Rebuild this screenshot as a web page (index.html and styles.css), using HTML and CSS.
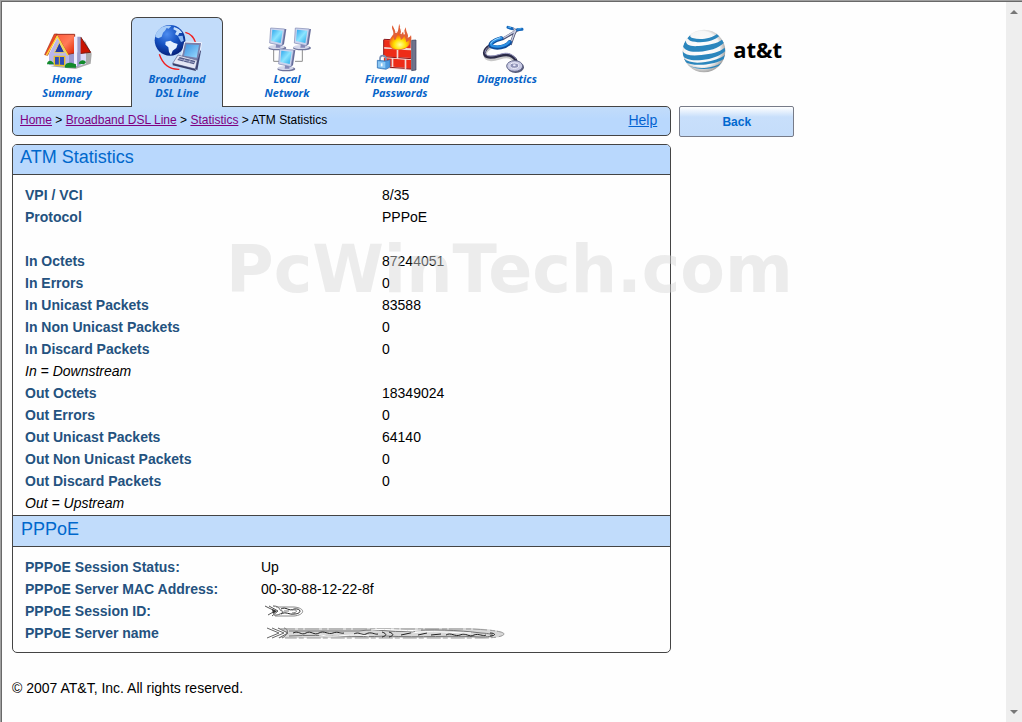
FILE: index.html
```html
<!DOCTYPE html>
<html lang="en">
<head>
    <meta charset="UTF-8">
    <meta name="viewport" content="width=device-width, initial-scale=1.0">
    <title>ATM Statistics</title>
    <link rel="stylesheet" href="styles.css">
</head>
<body>
    <div class="page">
        <main class="main">
            <nav class="tabs">
                <a href="#" class="tab">
                    <svg class="tab-icon" viewBox="123 66 156 156" aria-hidden="true">
                        <defs>
                            <linearGradient id="roof" x1="0" y1="0" x2="1" y2="1">
                                <stop offset="0" stop-color="#ff5a3c"/>
                                <stop offset=".5" stop-color="#ff7a58"/>
                                <stop offset="1" stop-color="#e02000"/>
                            </linearGradient>
                        </defs>
                        <path d="M150 196l76 8 46-16 3-30-21-40-8 70z" fill="#555" opacity=".5"/>
                        <path d="M147 160l25-50 34 50v38l-59-6z" fill="#b9b6ec"/>
                        <path d="M206 158l30-4v42l-30 4z" fill="#9a98d0"/>
                        <path d="M236 152l22 2v34l-22 8z" fill="#dcdaf8"/>
                        <path d="M172 99l-9 0 -29 62 9 2z" fill="#f04a20" stroke="#a03020" stroke-width="2"/>
                        <path d="M170 100h54v56l-20 4z" fill="url(#roof)" stroke="#a03020" stroke-width="3"/>
                        <path d="M242 108l30 46-36 4z" fill="#c81400" stroke="#7a1a10" stroke-width="3"/>
                        <path d="M222 107h10v88h-10z" fill="#ececff"/>
                        <path d="M232 107h10v86l-10 3z" fill="#9c9dcc"/>
                        <path d="M139 163l33-57 32 57" fill="none" stroke="#ffd83c" stroke-width="4"/>
                        <path d="M178 124l16 31h-31z" fill="#2439a8" stroke="#f5d860" stroke-width="3"/>
                        <path d="M163 166h31v28l-31-2z" fill="#2e4cb4" stroke="#e8bf2c" stroke-width="4"/>
                        <path d="M178 166v28" stroke="#e8bf2c" stroke-width="3"/>
                        <path d="M141 190c0-14 17-14 21 0zM194 196c4-14 20-12 34-6v10h-32zM236 188c2-12 18-14 22-4l-6 6z" fill="#128a2b"/>
                    </svg>
                    <span class="tab-label">Home<br>Summary</span>
                </a>
                <a href="#" class="tab active" aria-current="page">
                    <svg class="tab-icon" viewBox="453 66 156 156" aria-hidden="true">
                        <defs>
                            <radialGradient id="globe" cx=".4" cy=".3" r=".75">
                                <stop offset="0" stop-color="#4c8cf0"/>
                                <stop offset=".5" stop-color="#1450c0"/>
                                <stop offset="1" stop-color="#041c74"/>
                            </radialGradient>
                            <linearGradient id="laptop" x1="0" y1="0" x2="1" y2="1">
                                <stop offset="0" stop-color="#3a90e0"/>
                                <stop offset="1" stop-color="#9adcff"/>
                            </linearGradient>
                        </defs>
                        <path d="M556 94c16 4 26 14 31 32M478 160c10 30 32 46 60 45" fill="none" stroke="#f02020" stroke-width="4"/>
                        <circle cx="510" cy="118" r="46" fill="url(#globe)"/>
                        <path d="M478 84c10-9 24-11 36-9l-8 8-6-2-5 8-6 6-4 12-10 5-9-4c0-9 5-18 12-24z" fill="#a8cdf8"/>
                        <path d="M522 78c12 3 20 9 25 18l-9 0-4 8-9-4 5-10-10-5z" fill="#c4defc"/>
                        <path d="M497 122l14-3 10 6 12 4-4 12-11 8-5 14-6-10-2-14-9-8z" fill="#e4f0ff"/>
                        <path d="M534 106l14-2 3 16-8 3z" fill="#8cb8f4"/>
                        <path d="M554 123l51 2-10 55-52-8z" fill="#7880ac" stroke="#f0f4ff" stroke-width="3"/>
                        <path d="M559 130l38 2-7 38-38-6z" fill="url(#laptop)"/>
                        <path d="M534 162l58 16-6 26-68-17z" fill="#e4e6f4" stroke="#5c628c" stroke-width="2"/>
                        <path d="M539 168l47 12-4 10-50-13z" fill="#525a88"/>
                        <path d="M535 173l48 12M556 172l-6 11M571 176l-5 11" stroke="#c8cce4" stroke-width="2"/>
                        <path d="M518 187l68 17 2 6-70-17z" fill="#38406c"/>
                        <path d="M592 178l9-30 2 2-11 58-6-4z" fill="#3f4674"/>
                    </svg>
                    <span class="tab-label">Broadband<br>DSL Line</span>
                </a>
                <a href="#" class="tab">
                    <svg class="tab-icon" viewBox="63 66 156 156" aria-hidden="true">
                        <defs>
                            <linearGradient id="screen" x1="0" y1="0" x2="1" y2="1">
                                <stop offset="0" stop-color="#2ca4ec"/>
                                <stop offset=".5" stop-color="#8ce4ff"/>
                                <stop offset="1" stop-color="#20a8e8"/>
                            </linearGradient>
                            <g id="monitor">
                                <ellipse cx="26" cy="61" rx="27" ry="7" fill="#70759c"/>
                                <ellipse cx="24" cy="58" rx="24" ry="6" fill="#d4d7ea"/>
                                <path d="M23 46l14 2-2 12H21z" fill="#868ab8"/>
                                <path d="M44 5l9-1-7 46-9 6z" fill="#666c9a"/>
                                <path d="M6 1l42 3-8 50-37-8z" fill="#ccd4ee" stroke="#7d86b0" stroke-width="2"/>
                                <path d="M11 6l31 3-6 37-28-6z" fill="url(#screen)"/>
                            </g>
                        </defs>
                        <path d="M101 140v41h16M187 140v41h-22" fill="none" stroke="#8c8c8c" stroke-width="3"/>
                        <use href="#monitor" x="86" y="80"/>
                        <use href="#monitor" x="160" y="80"/>
                        <use href="#monitor" x="113" y="143"/>
                    </svg>
                    <span class="tab-label">Local<br>Network</span>
                </a>
                <a href="#" class="tab">
                    <svg class="tab-icon" viewBox="393 66 156 156" aria-hidden="true">
                        <defs>
                            <radialGradient id="flame" cx=".5" cy=".72" r=".6">
                                <stop offset="0" stop-color="#ffffa0"/>
                                <stop offset=".5" stop-color="#ffe000"/>
                                <stop offset="1" stop-color="#f85a10"/>
                            </radialGradient>
                        </defs>
                        <path d="M430 114l85 4v90l-85-6z" fill="#f4d8d4"/>
                        <path d="M515 118l13-1v90l-13 2z" fill="#70748c" stroke="#383c58" stroke-width="2"/>
                        <path d="M432 117l26 1v22l-26-2zM462 118l50 4v20l-50-3zM432 143l38 2v24l-38-3zM475 146l38 2v23l-38-2zM432 171l23 2v24l-23-2zM460 173l34 3v24l-34-3zM499 176l14 1v27l-14-2z" fill="#ee2c18"/>
                        <path d="M432 167l38 3M475 170l38 3M450 199l44 3M431 116v50M499 203l14 1M432 115l22 1M500 119l13 1" stroke="#8c1418" stroke-width="3"/>
                        <path d="M451 137c-8-15 0-25 9-37 2-12-8-17-2-27 3 12 12 13 12 24 8-10 2-17 8-28 1 10 10 16 6 27 8-2 8-9 14-17-2 13 10 22 5 31 6-1 8-4 10-8 4 17-2 40-28 44-17 2-30 0-34-9z" fill="#e06038"/>
                        <path d="M451 133c-4-12 4-19 10-30 1 9 0 12 4 15 5-7 4-14 11-23 1 10 8 14 6 22 7-2 8-9 13-14-1 9 5 13 3 20 6-1 8-4 11-8 3 16-7 28-29 30-16 1-26-2-29-12z" fill="url(#flame)"/>
                        <path d="M463 79c3 8 6 9 5 17M481 77c2 10 7 13 2 22M474 72l-2 16M492 80c-3 8 0 14 1 20" fill="none" stroke="#fff" stroke-width="4"/>
                        <path d="M420 180v-7c0-12 17-12 18 0v8" fill="none" stroke="#7890b4" stroke-width="5"/>
                        <path d="M412 178l26 2 12-4v22l-12 7-26-4z" fill="#4f9ade" stroke="#2a6cb0" stroke-width="2"/>
                        <path d="M414 181l22 2v19l-22-3z" fill="#8cc8f4"/>
                        <path d="M425 187v9" stroke="#fff" stroke-width="5"/>
                    </svg>
                    <span class="tab-label">Firewall and<br>&nbsp; Passwords</span>
                </a>
                <a href="#" class="tab">
                    <svg class="tab-icon" viewBox="723 66 156 156" aria-hidden="true">
                        <path d="M757 137c-28 14-30 38-4 39 22 1 40-16 59-6 12 6 14 14 13 24" fill="none" stroke="#777" stroke-width="9" opacity=".4"/>
                        <path d="M753 132c-26 14-26 36-2 37 22 1 40-14 59-6 14 6 19 14 20 24" fill="none" stroke="#2c2c48" stroke-width="9"/>
                        <path d="M751 134c-22 14-20 30 0 31 22 1 40-14 59-6 8 3 14 8 17 14" fill="none" stroke="#9c9cc4" stroke-width="3"/>
                        <path d="M812 81c12 3 17 6 12 12l-38 22M838 86c-12 0-14 8-16 15l-11 30" fill="none" stroke="#4c5070" stroke-width="8"/>
                        <path d="M812 80c12 3 16 6 11 12l-38 22M837 85c-11 0-13 8-15 15l-11 30" fill="none" stroke="#c8cce0" stroke-width="4"/>
                        <path d="M784 112c-24 6-39 19-29 24 14 7 42 4 54-12" fill="none" stroke="#0c4c9c" stroke-width="13" stroke-linecap="round"/>
                        <path d="M784 111c-24 6-37 17-28 23 13 6 40 3 52-12" fill="none" stroke="#2c90e4" stroke-width="7" stroke-linecap="round"/>
                        <path d="M781 110c-18 5-27 12-29 18" fill="none" stroke="#a4dcff" stroke-width="3"/>
                        <path d="M804 79l12 4M832 86l14-1" stroke="#1668bc" stroke-width="9" stroke-linecap="round"/>
                        <path d="M804 78l9 2M832 84l12-1" stroke="#58b4f0" stroke-width="3"/>
                        <ellipse cx="827" cy="199" rx="25" ry="17" fill="#565a78"/>
                        <ellipse cx="824" cy="195" rx="24" ry="16" fill="#c8cae4" stroke="#666b8e" stroke-width="3"/>
                        <ellipse cx="823" cy="194" rx="13" ry="8" fill="#9094b8" stroke="#f4f4ff" stroke-width="3"/>
                        <ellipse cx="823" cy="193" rx="4" ry="3" fill="#e8eafc"/>
                    </svg>
                    <span class="tab-label">Diagnostics</span>
                </a>
            </nav>

            <div class="breadcrumb">
                <div class="trail">
                    <a href="#">Home</a> &gt; <a href="#">Broadband DSL Line</a> &gt; <a href="#">Statistics</a> &gt; ATM Statistics
                </div>
                <a href="#" class="help">Help</a>
            </div>

            <section class="panel">
                <h2>ATM Statistics</h2>
                <table class="stats">
                    <tbody>
                        <tr><th scope="row">VPI / VCI</th><td>8/35</td></tr>
                        <tr><th scope="row">Protocol</th><td>PPPoE</td></tr>
                        <tr><td colspan="2"></td></tr>
                        <tr><th scope="row">In Octets</th><td>87244051</td></tr>
                        <tr><th scope="row">In Errors</th><td>0</td></tr>
                        <tr><th scope="row">In Unicast Packets</th><td>83588</td></tr>
                        <tr><th scope="row">In Non Unicast Packets</th><td>0</td></tr>
                        <tr><th scope="row">In Discard Packets</th><td>0</td></tr>
                        <tr><td colspan="2" class="note">In = Downstream</td></tr>
                        <tr><th scope="row">Out Octets</th><td>18349024</td></tr>
                        <tr><th scope="row">Out Errors</th><td>0</td></tr>
                        <tr><th scope="row">Out Unicast Packets</th><td>64140</td></tr>
                        <tr><th scope="row">Out Non Unicast Packets</th><td>0</td></tr>
                        <tr><th scope="row">Out Discard Packets</th><td>0</td></tr>
                        <tr><td colspan="2" class="note">Out = Upstream</td></tr>
                    </tbody>
                </table>

                <h2>PPPoE</h2>
                <table class="stats session">
                    <tbody>
                        <tr><th scope="row">PPPoE Session Status:</th><td>Up</td></tr>
                        <tr><th scope="row">PPPoE Server MAC Address:</th><td>00-30-88-12-22-8f</td></tr>
                        <tr>
                            <th scope="row">PPPoE Session ID:</th>
                            <td>
                                <svg class="smudge" width="44" height="12" viewBox="0 0 44 12" role="img" aria-label="hidden">
                                    <g fill="none" stroke="#555">
                                        <path d="M4 1l10 5-7 4M8 1l9 5-6 5M12 1c8 0 5 4 9 5s-5 5-8 4"/>
                                        <path d="M15 2h18c12 1 11 8 0 9H14" stroke="#888"/>
                                        <path d="M20 4c5-3 8 3 13 0 8-1 8 5 0 5-5 1-8-3-13 0" stroke="#222"/>
                                        <path d="M31 5c6-1 6 3 0 3M23 6h5" stroke="#777"/>
                                    </g>
                                    <path d="M11 4l5 2-4 3z" fill="#333"/>
                                </svg>
                            </td>
                        </tr>
                        <tr>
                            <th scope="row">PPPoE Server name</th>
                            <td>
                                <svg class="smudge" width="246" height="12" viewBox="0 0 246 12" role="img" aria-label="hidden">
                                    <path d="M16 1h194c20 1 34 3 33 6s-8 4-20 4H16l10-5z" fill="#d8d8d8"/>
                                    <g fill="none" stroke="#666">
                                        <path d="M6 1l12 5-12 5M11 1l12 5-12 5M17 1l10 5-9 5M23 1c6 1 3 8-2 10"/>
                                        <path d="M20 2h190c24 1 33 3 33 5s-8 4-20 4H24" stroke="#999" stroke-dasharray="14 3 5 2"/>
                                        <path d="M28 4h70c20-3 30 2 50 0s50-1 72 2c18 1 13 4 0 4-30-2-60 1-95-1-30 2-60-2-97 0" stroke="#777"/>
                                    </g>
                                    <g fill="none" stroke="#222">
                                        <path d="M32 6c6-3 8 3 13 0s8 3 13 0 9 2 14 0 8 1 11 0"/>
                                        <path d="M93 7c5-3 8 2 12 0 5-3 9 1 12 0M121 5c6 2 4 4 0 5M128 5c6 2 4 4 0 5"/>
                                        <path d="M140 8l14-3M157 8l9-2M170 8l10-1M185 8c5-3 9 2 14 0 6-3 9 3 14 0 5-2 9 2 12 0M229 6c6 0 6 3 0 3"/>
                                    </g>
                                    <path d="M58 8c20 3 30-2 50 1M110 3c20-2 30 2 50 0M150 6c20-3 40 0 60 0" fill="none" stroke="#fff"/>
                                </svg>
                            </td>
                        </tr>
                    </tbody>
                </table>
                <div class="watermark">PcWinTech.com</div>
            </section>

            <footer>© 2007 AT&amp;T, Inc. All rights reserved.</footer>
        </main>

        <aside class="side">
            <div class="logo">
                <svg class="logo-globe" viewBox="0 0 132 132" aria-hidden="true">
                    <defs>
                        <radialGradient id="ball" cx=".45" cy=".45" r=".55">
                            <stop offset="0" stop-color="#fff"/>
                            <stop offset=".75" stop-color="#f6f6f6"/>
                            <stop offset="1" stop-color="#a8a8a8"/>
                        </radialGradient>
                        <clipPath id="ballclip"><circle cx="66" cy="66" r="64"/></clipPath>
                    </defs>
                    <circle cx="66" cy="66" r="64" fill="url(#ball)"/>
                    <g fill="#2b86bd" clip-path="url(#ballclip)">
                        <path d="M28 14c-6 6-4 10 4 13 22 7 56 2 74-13l6 7c-16 16-56 24-88 14l-8-7z"/>
                        <path d="M12 34c-2 14 12 19 38 17 26-2 56-6 72-20l4 10C108 58 82 66 50 68 24 70 8 64 2 50z"/>
                        <path d="M0 66c10 12 28 16 58 12 30-4 54-8 70-22l2 10c-18 16-40 24-70 27C30 96 10 92 0 78z"/>
                        <path d="M4 88c16 14 40 15 66 11 22-4 44-9 60-22l-4 12c-18 12-40 16-62 18-26 2-44-2-54-8z"/>
                        <path d="M16 108c16 8 38 10 58 8 18-2 32-6 44-14l-8 9c-14 6-28 9-44 9-18 0-32-3-42-8z"/>
                    </g>
                </svg>
                <span class="logo-text">at&amp;t</span>
            </div>
            <button type="button" class="back">Back</button>
        </aside>
    </div>

    <div class="scrollbar" aria-hidden="true">
        <svg width="8" height="4" viewBox="0 0 8 4"><path d="M0 4l4-4 4 4z" fill="#777"/></svg>
        <svg width="8" height="4" viewBox="0 0 8 4"><path d="M0 0h8l-4 4z" fill="#777"/></svg>
    </div>
</body>
</html>
```

FILE: styles.css
```css
* {
    box-sizing: border-box;
}
body {
    display: flex;
    min-height: 100vh;
    margin: 0;
    border-top: 1px solid #a0a0a0;
    border-left: 1px solid #a0a0a0;
    background-color: #fefefe;
    color: #000;
    font-family: "Liberation Sans", Arial, sans-serif;
    font-size: 14px;
}
.page {
    flex: 1;
    display: grid;
    grid-template-columns: 67fr 33fr;
    align-items: start;
    gap: 8px;
    padding: 15px 2px 24px 10px;
    border-top: 1px solid #696969;
    border-left: 1px solid #696969;
}

/* top tabs */
.tabs {
    display: flex;
    gap: 18px;
    height: 89px;
    padding-left: 9px;
}
.tab {
    display: flex;
    flex-direction: column;
    align-items: center;
    width: 92px;
    padding-top: 5px;
    border: 1px solid transparent;
    border-bottom: none;
    border-radius: 6px 6px 0 0;
    text-decoration: none;
}
.tab.active {
    z-index: 1;
    height: 90px;
    border-color: #444;
    background-color: #c2dcfa;
}
.tab-icon {
    width: 52px;
    height: 52px;
    margin-bottom: -3px;
}
.tab-label {
    color: #0563c8;
    font-family: "Open Sans", "Noto Sans", sans-serif;
    font-size: 11px;
    font-style: italic;
    font-weight: bold;
    line-height: 14px;
    text-align: center;
    white-space: nowrap;
}

.breadcrumb {
    display: flex;
    justify-content: space-between;
    height: 30px;
    margin-bottom: 8px;
    padding: 0 13px 0 7px;
    border: 1px solid #444;
    border-radius: 5px;
    background: linear-gradient(#c2dcfa, #b9d8fd 12px);
    font-size: 12px;
    line-height: 26px;
}
.trail a {
    color: #800080;
}
.breadcrumb .help {
    color: #0563d1;
    font-size: 14px;
}

/* statistics panel */
.panel {
    position: relative;
    padding-bottom: 8px;
    border: 1px solid #444;
    border-radius: 5px;
}
.panel h2 {
    height: 32px;
    margin: 0;
    padding-left: 8px;
    border-top: 1px solid #444;
    border-bottom: 1px solid #444;
    background-color: #c1dcfb;
    color: #0068cc;
    font-size: 18px;
    font-weight: normal;
    line-height: 26px;
}
.panel h2:first-child {
    height: 30px;
    padding-left: 7px;
    border-top: none;
    border-radius: 4px 4px 0 0;
    background-color: #b9d8fd;
    line-height: 24px;
}
.stats {
    width: 97%;
    margin: 9px 0 1px 12px;
    border-collapse: collapse;
    table-layout: fixed;
}
.stats th,
.stats td {
    height: 22px;
    padding: 0;
    line-height: 22px;
    text-align: left;
}
.stats th {
    width: 56%;
    color: #24527f;
}
.session {
    margin-bottom: 0;
}
.session th {
    width: 37%;
}
.stats .note {
    font-style: italic;
}
.smudge {
    display: block;
}

/* site name printed over the table */
.watermark {
    position: absolute;
    top: 88px;
    left: 213px;
    color: rgba(216, 216, 216, 0.46);
    font-family: "DejaVu Sans", Verdana, sans-serif;
    font-size: 65px;
    font-weight: bold;
    line-height: 74px;
    white-space: nowrap;
    pointer-events: none;
}

footer {
    margin-top: 27px;
    line-height: 16px;
}

/* logo and back button */
.logo {
    display: flex;
    align-items: center;
    gap: 7px;
    height: 89px;
    padding: 0 0 22px 3px;
}
.logo-globe {
    width: 44px;
    height: 44px;
}
.logo-text {
    padding-bottom: 4px;
    font-family: "Open Sans", "Noto Sans", sans-serif;
    font-size: 22px;
    font-weight: bold;
    line-height: 30px;
}
.back {
    width: 115px;
    height: 31px;
    padding: 0;
    border: 1px solid #777b88;
    border-radius: 2px;
    background: linear-gradient(#fff, #c8dffb 10px, #c5ddfa);
    color: #0068d0;
    font-family: inherit;
    font-size: 12px;
    font-weight: bold;
    cursor: pointer;
}

.scrollbar {
    display: flex;
    flex-direction: column;
    align-items: center;
    justify-content: space-between;
    width: 16px;
    padding: 8px 0;
    border-top: 1px solid #696969;
    background-color: #eee;
}
```
